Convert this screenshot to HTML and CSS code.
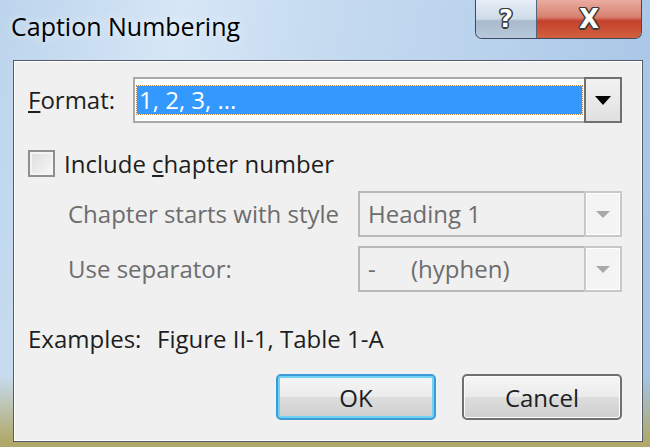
FILE: index.html
```html
<!DOCTYPE html>
<html lang="en">
<head>
    <meta charset="UTF-8">
    <title>Caption Numbering</title>
    <link rel="stylesheet" href="styles.css">
</head>
<body>

<div class="window">
    <!-- Title bar with caption buttons -->
    <div class="titlebar">
        <div class="title">Caption Numbering</div>
        <div class="caption-buttons">
            <div class="cap-btn help">?</div>
            <div class="cap-btn close">X</div>
        </div>
    </div>

    <div class="client">
        <div class="row format-row">
            <label class="label"><u>F</u>ormat:</label>
            <div class="combo active">
                <div class="combo-field"><span class="selected">1, 2, 3, ...</span></div>
                <div class="combo-arrow"><span class="tri"></span></div>
            </div>
        </div>

        <div class="check-row">
            <span class="checkbox"></span>
            <span>Include <u>c</u>hapter number</span>
        </div>

        <div class="row sub-row">
            <span class="sub-label">Chapter starts with style</span>
            <div class="combo disabled">
                <div class="combo-field">Heading 1</div>
                <div class="combo-arrow"><span class="tri"></span></div>
            </div>
        </div>

        <div class="row sub-row">
            <span class="sub-label">Use separator:</span>
            <div class="combo disabled">
                <div class="combo-field"><span class="dash">-</span>(hyphen)</div>
                <div class="combo-arrow"><span class="tri"></span></div>
            </div>
        </div>

        <div class="examples">
            <span class="ex-label">Examples:</span>
            <span>Figure II-1, Table 1-A</span>
        </div>

        <div class="buttons">
            <button class="btn default">OK</button>
            <button class="btn">Cancel</button>
        </div>
    </div>
</div>

</body>
</html>
```

FILE: styles.css
```css
/* Windows 7 style dialog */
body {
    margin: 0;
    padding: 0;
    font-family: "Open Sans", "Noto Sans", sans-serif;
    color: #1e1e1e;
}

.window {
    width: 650px;
    height: 447px;
    display: flex;
    flex-direction: column;
    overflow: hidden;
    background:
        linear-gradient(to bottom, rgba(0, 0, 0, 0) 84%, #b0a868 99%),
        linear-gradient(100deg, #bcd4ec 0%, #d6e6f6 25%, #c6dbf0 45%, #b8d1ec 70%, #a3c3e6 100%);
}

.titlebar {
    height: 60px;
    display: flex;
    justify-content: space-between;
    align-items: flex-start;
    flex-shrink: 0;
}

.title {
    font-size: 25px;
    color: #000;
    margin: 9px 0 0 11px;
    text-shadow: 0 0 8px rgba(255, 255, 255, 0.8);
}

.caption-buttons {
    display: flex;
    margin-right: 8px;
    border: 1px solid #3b4a5e;
    border-top: none;
    border-radius: 0 0 7px 7px;
    overflow: hidden;
    height: 38px;
}

.cap-btn {
    display: flex;
    align-items: center;
    justify-content: center;
    font-family: "DejaVu Sans", sans-serif;
    font-weight: bold;
    color: #fff;
    text-shadow: -1px -1px 0 #3a3a3a, 1px -1px 0 #3a3a3a, -1px 1px 0 #3a3a3a, 1px 1px 0 #3a3a3a,
        0 -1.5px 0 #3a3a3a, 0 1.5px 0 #3a3a3a, -1.5px 0 0 #3a3a3a, 1.5px 0 0 #3a3a3a;
}

.help {
    width: 60px;
    font-size: 24px;
    background: linear-gradient(to bottom, #e6eef6 0%, #cfdbe8 50%, #a9bace 55%, #b8c8da 100%);
    border-right: 1px solid #54647a;
}

.close {
    width: 104px;
    font-size: 26px;
    background: linear-gradient(to bottom, #e9ada0 0%, #d88070 45%, #c4412c 55%, #d2603e 100%);
}

.client {
    flex: 1;
    margin: 0 7px 5px 13px;
    background-color: #f0f0f0;
    border: 1px solid #525b66;
    box-shadow: inset 0 0 0 1px #ffffff;
    padding: 16px 20px 0 14px;
    font-size: 24px;
    line-height: 30px;
    display: flex;
    flex-direction: column;
}

.row {
    display: flex;
    align-items: center;
    justify-content: space-between;
}

.label {
    width: 105px;
}

.combo {
    display: flex;
    height: 46px;
    box-sizing: border-box;
    border: 2px solid #a9a9a9;
    background: #fff;
}

.format-row .combo {
    flex: 1;
}

.combo-field {
    flex: 1;
    display: flex;
    align-items: center;
    padding: 0 8px;
}

.active .combo-field {
    padding: 0 2px;
}

.selected {
    flex: 1;
    background-color: #3399ff;
    color: #fff;
    height: 28px;
    line-height: 28px;
    padding-left: 2px;
    outline: 1px dotted #c08040;
}

.combo-arrow {
    width: 34px;
    display: flex;
    align-items: center;
    justify-content: center;
    background: linear-gradient(to bottom, #f2f2f2, #e0e0e0);
    border: 2px solid #707070;
    margin: -2px -2px -2px 0;
}

.tri {
    width: 0;
    height: 0;
    border-left: 8px solid transparent;
    border-right: 8px solid transparent;
    border-top: 9px solid #000;
}

.check-row {
    display: flex;
    align-items: center;
    height: 27px;
    margin-top: 27px;
    gap: 9px;
}

.checkbox {
    width: 23px;
    height: 23px;
    border: 2px solid #8f8f8f;
    background: linear-gradient(135deg, #dcdcdc, #f8f8f8);
    box-shadow: inset 0 0 0 2px #f4f4f4;
}

.sub-row {
    margin-top: 14px;
    padding-left: 40px;
    color: #6d6d6d;
}

.sub-row + .sub-row {
    margin-top: 9px;
}

.disabled {
    width: 264px;
    background: #f0f0f0;
    border-color: #b9b9b9;
}

.disabled .combo-arrow {
    background: #f4f4f4;
    border: 2px solid #c8c8c8;
    box-shadow: inset 0 0 0 1px #fff;
}

.disabled .tri {
    border-left-width: 7px;
    border-right-width: 7px;
    border-top: 7px solid #a8a8a8;
}

.dash {
    width: 43px;
}

.examples {
    margin-top: 32px;
    display: flex;
}

.ex-label {
    width: 129px;
}

.buttons {
    display: flex;
    justify-content: flex-end;
    gap: 26px;
    margin-top: 20px;
}

.btn {
    width: 160px;
    height: 46px;
    font-family: inherit;
    font-size: 24px;
    color: #1e1e1e;
    border: 2px solid #707070;
    border-radius: 5px;
    background: linear-gradient(to bottom, #f6f6f6 0%, #ebebeb 50%, #dddddd 51%, #cfcfcf 100%);
    box-shadow: inset 0 0 0 1px #fcfcfc;
}

.btn.default {
    border-color: #3c9bd4;
    box-shadow: inset 0 0 0 2px #6fd1f5;
}
```
